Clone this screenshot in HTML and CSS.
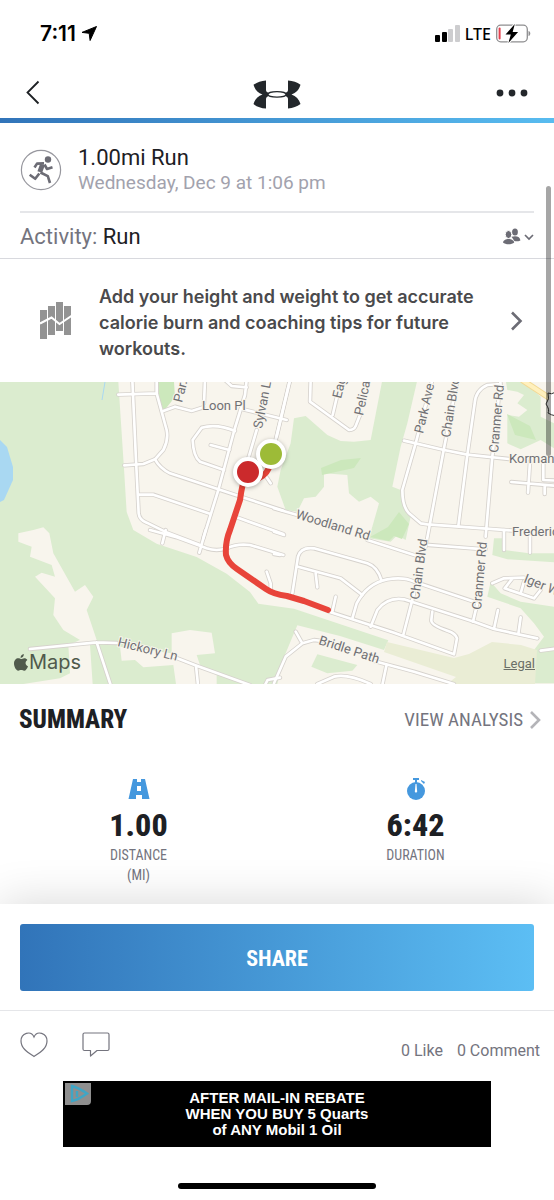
FILE: index.html
```html
<!DOCTYPE html>
<html lang="en">
<head>
    <meta charset="UTF-8">
    <meta name="viewport" content="width=device-width, initial-scale=1.0">
    <title>1.00mi Run</title>
    <link rel="stylesheet" href="styles.css">
</head>
<body>

<div class="status-bar">
    <div class="status-group">
        <span class="time">7:11</span>
        <svg width="15" height="15" viewBox="0 0 15 15"><path d="M14.5 .5 0 6.4l7.2.9.9 7.2z" stroke="#000" stroke-linejoin="round"/></svg>
    </div>
    <div class="status-group status-right">
        <svg width="25" height="17" viewBox="0 0 25 17">
            <rect x="0" y="10" width="5" height="7" rx="1"/>
            <rect x="7" y="7" width="5" height="10" rx="1"/>
            <rect x="13" y="4" width="5" height="13" rx="1" fill="#cdcdcf"/>
            <rect x="20" y="0" width="5" height="17" rx="1" fill="#cdcdcf"/>
        </svg>
        <span class="network">LTE</span>
        <svg width="35" height="19" viewBox="0 0 35 19">
            <rect x=".7" y="1.2" width="30.6" height="16.6" rx="4" fill="#fff" stroke="#8e8e90" stroke-width="1.3"/>
            <path d="M32.5 7v5c2.4-.6 2.4-4.4 0-5z" fill="#8e8e90"/>
            <rect x="2.6" y="3.5" width="2" height="12" rx="1" fill="#e5404e"/>
            <path d="M18.8 0 9.5 10.6h5.3L12.4 19l9.7-11h-5.4z" stroke="#fff" stroke-width="2" paint-order="stroke"/>
        </svg>
    </div>
</div>

<header class="navbar">
    <button class="icon-button" aria-label="Back">
        <svg width="14" height="25" viewBox="0 0 14 25" fill="none" stroke="#1d2024" stroke-width="1.8"><path d="M12.5 1.5 1.5 12.5l11 11"/></svg>
    </button>
    <svg class="logo" width="48" height="29" viewBox="0 0 48 29" fill="#23272b">
        <path d="M13 .5C8 1 4 2.200.5 4.800 2 10 5 13 9.500 14.400 5 16 2 19 .5 24 4 26.800 8 28 13 28.500V19q0-2.500 4-3.500v-2.200q-4-.8-4-3.300z"/>
        <path d="M35 .5c5 .5 9 1.700 12.500 4.300-1.500 5.200-4.500 8.200-9 9.600 4.500 1.600 7.500 4.600 9 9.600-3.500 2.800-7.500 4-12.500 4.500V19q0-2.500-4-3.500v-2.200q4-.8 4-3.300z"/>
        <ellipse cx="24" cy="14.400" rx="9" ry="2.700" fill="#fff" stroke="#23272b" stroke-width="1.200"/>
    </svg>
    <button class="icon-button" aria-label="More options">
        <svg width="32" height="8" viewBox="0 0 32 8" fill="#23272b"><circle cx="4" cy="4" r="3.400"/><circle cx="16" cy="4" r="3.400"/><circle cx="28" cy="4" r="3.400"/></svg>
    </button>
</header>

<main>
    <div class="scrollbar"></div>

    <section class="workout">
        <svg class="run-icon" width="42" height="42" viewBox="0 0 42 42">
            <circle cx="21" cy="21" r="19.600" fill="#fff" stroke="#97979e" stroke-width="1.200"/>
            <circle cx="28" cy="10.500" r="3.200" fill="#6c6c75"/>
            <g fill="none" stroke="#6c6c75" stroke-linejoin="round">
                <path d="M14.500 18.500 17 14.600 24 14.400" stroke-width="2.600"/>
                <path d="M24.500 15.500 27 20l5.500-1.800" stroke-width="2.600"/>
                <path d="m22.500 15.500-2.700 7.500" stroke-width="5"/>
                <path d="m20.500 23.500 7.300 3.700 2.200 6.800" stroke-width="2.600"/>
                <path d="m19.300 24.500-4.100 5.300-5.500-4" stroke-width="2.600"/>
            </g>
        </svg>
        <div>
            <h1>1.00mi Run</h1>
            <p class="date">Wednesday, Dec 9 at 1:06 pm</p>
        </div>
    </section>

    <section class="activity">
        <p>Activity: <strong>Run</strong></p>
        <button class="icon-button" aria-label="Change privacy">
            <svg width="32" height="18" viewBox="0 0 32 18" fill="#6c6c75">
                <ellipse cx="13" cy="4" rx="2.900" ry="3.600"/>
                <path d="M9.500 8.800c5-1.500 8.700.2 8.900 3.600-1.800.9-4.500 1-6 .6z"/>
                <ellipse cx="6.500" cy="6.500" rx="3.300" ry="4" stroke="#fff" stroke-width="1"/>
                <path d="M1 14.500c.3-4.700 10.800-4.700 11.200 0-2.400 2.400-8.900 2.400-11.200 0z"/>
                <path d="m23 7 4 4 4-4" fill="none" stroke="#6c6c75" stroke-width="1.700"/>
            </svg>
        </button>
    </section>

    <a class="tip" href="#">
        <svg width="32" height="39" viewBox="0 0 32 39">
            <path d="M0 9h7v29H0zM8 5h7v29H8zM16 1h7v29h-7zM24 5h7v29h-7z" fill="#939393"/>
            <path d="m0 22.500 11.500-6 8 6.500L32 14.500" fill="none" stroke="#fff" stroke-width="2"/>
        </svg>
        <span class="tip-text">Add your height and weight to get accurate calorie burn and coaching tips for future workouts.</span>
        <svg width="13" height="20" viewBox="0 0 13 20" fill="none" stroke="#6c6c75" stroke-width="2.600"><path d="m2 1.500 8.500 8.500L2 18.500"/></svg>
    </a>

    <div class="map">
        <svg class="map-drawing" viewBox="0 0 554 302" preserveAspectRatio="xMidYMid slice">
            <defs>
                <!-- roads are stroked twice: casing, then fill -->
                <g id="roads" fill="none" stroke-linejoin="round" stroke-linecap="round" transform="scale(.33333)">
                    <g transform="translate(0 -6)">
                        <path d="M397 0 408 240 416 400Q418 420 440 428L495 455 600 495"/>
                        <path d="M355 44 470 40M470 0V40L500 150Q506 180 490 210L465 238 430 252 373 256"/>
                        <path d="M465 238Q480 265 510 280L655 328 850 392M490 93 525 80 575 93 610 82M615 0 612 70"/>
                        <path d="M675 0 695 18 740 22M740 0 735 45 703 150 655 330 610 475"/>
                        <path d="M730 88 860 120M705 153Q650 130 605 143L578 180Q580 230 600 245L672 270M632 195 688 210"/>
                        <path d="M770 150 745 235M795 285 812 310M415 344H460L632 402M710 412 850 462M870 0 830 170"/>
                    </g>
                    <g transform="translate(822 -6)">
                        <path d="M110 0 108 65 225 150Q240 150 245 138L260 100M190 45 176 105M48 0 0 200"/>
                        <path d="M390 182 510 210 580 224 705 237M475 0 425 190 385 330Q385 380 405 400L440 430 460 433 555 440 720 452"/>
                        <path d="M550 0 510 205 455 500M680 12 640 15Q605 30 602 70L580 225 553 438M680 0 655 230 635 470"/>
                        <path d="M768 245 762 338M808 250V300L850 302M712 306 850 318M812 318V342M0 385 70 405"/>
                    </g>
                    <g transform="translate(0 444)">
                        <path d="M450 0 530 22 620 55Q650 65 680 55 710 40 750 45L850 75M497 0 487 40M617 0 598 68M800 125 812 160V185"/>
                        <path d="M90 357 290 337 350 339M290 337 332 465M520 380 590 407 750 465M588 407 594 465M795 465 803 450 840 443"/>
                    </g>
                    <g transform="translate(822 444)">
                        <path d="M0 5 30 15M0 72 18 75M280 30 430 78M465 45 635 58M690 0V60M768 10V68"/>
                        <path d="M55 190 72 80Q80 50 120 55L280 100Q310 110 322 150M72 110 200 145 265 195M125 130 130 172"/>
                        <path d="M235 265 248 220Q280 160 340 148 390 140 420 155L600 215M290 290 310 240Q340 200 390 208L600 275 660 297 790 325"/>
                        <path d="M165 245 360 308 540 373M185 200 175 245M420 190 387 318M540 373 549 325Q545 310 520 302 470 285 472 270L475 245"/>
                        <path d="M610 220 597 275M672 240 660 296M740 262 733 312M65 305 82 335M0 460 35 380 85 340 120 330 160 335"/>
                        <path d="M300 393 420 425 540 462M338 403 325 465M130 462 180 440Q220 430 290 462"/>
                        <path d="M655 160 690 145 750 143M715 146 692 175 780 205 800 180M750 155 740 190M800 362 850 355"/>
                    </g>
                </g>
            </defs>

            <rect width="554" height="302" fill="#f8f5ed"/>

            <g fill="#dbeccf" transform="scale(.33333)">
                <path d="M0 0H355L372 260 380 390 400 444 470 485 590 525 680 575 750 630 775 665 882 680 1165 775 1152 804 1020 762 892 730 850 830 832 906H0Z"/>
                <g transform="translate(822 -6)">
                    <path d="M325 0H430L400 130 380 200 355 320 380 330 410 410 395 480 370 465 350 485 285 475 315 370 290 350 255 365 225 340 220 285 150 280 150 320 125 350 90 355 70 395 35 390 10 320 20 270 50 190 60 115 95 108 160 165 200 183 240 185 290 180Z"/>
                    <path d="M695 0H745L800 50V110L840 130V205L800 180 740 208 700 190V105L735 110 760 90 730 70 750 45 730 35 700 30Z"/>
                </g>
                <g transform="translate(822 444)">
                    <path d="M660 25H690V60L765 70H840V97L700 88 655 75Z"/>
                    <path d="M650 155 680 190 740 215 840 230V460H775L780 360 810 320 780 280 740 235 640 200Z"/>
                    <path d="M112 410 130 373 250 405 235 422 160 430Z"/>
                </g>
            </g>

            <g fill="#f8f5ed" transform="translate(0 148) scale(.33333)">
                <path d="M55 10 100 0 130-8 148 10 160 70 225 185 255 165 280 200 260 240 290 330 270 345 278 462H70L180 445 210 430 205 345 240 330 190 300 160 255 165 205 105 140 125 128 165 140 155 105 90 80 95 50 55 35Z"/>
                <path d="M360 350 365 392 405 390 430 412 520 405 528 462H650V430L600 405 590 375 645 370 635 308 570 300 515 310V370Z"/>
            </g>
            <path d="M469 272 492 260 521 263 537 268 535 302H447L456 295 384 270 387 260 454 276Z" fill="#eaedd5"/>
            <path d="M158 0H174L175 15 163 30 159 20ZM321 86 341 78 361 76 354 86 322 93ZM507 32 530 44 536 58 515 53ZM388 145 399 130 409 142 402 157 394 154 389 159 370 155Z" fill="#cce8bc"/>
            <path d="M0 58 7 65 13 85 13 98 4 118 0 120Z" fill="#a9d8f2"/>
            <path d="M105 0 102 18" stroke="#a9d8f2"/>
            <path d="M522-2 554 19" stroke="#f2d894" stroke-width="6"/>
            <path d="M522-2 554 19" stroke="#fff0bd" stroke-width="4"/>

            <use href="#roads" class="road-casing"/>
            <use href="#roads" class="road-fill"/>

            <path d="M548 11q3 2 8-1v24q-5-1-8-3 2-3-2-9 4-5 2-11z" fill="#fff" stroke="#333"/>

            <g class="road-label">
                <text x="202" y="28">Loon Pl</text>
                <text transform="translate(182 21) rotate(-76)">Par.</text>
                <text transform="translate(262 47) rotate(-79)">Sylvan L</text>
                <text transform="translate(341 17) rotate(-76)">Eag</text>
                <text transform="translate(363 34) rotate(-78)">Pelica</text>
                <text transform="translate(423 52) rotate(-77)">Park Ave</text>
                <text transform="translate(450 56) rotate(-81)">Chain Blvd</text>
                <text transform="translate(498 71) rotate(-85)">Cranmer Rd</text>
                <text x="509" y="81">Korman</text>
                <text x="512" y="154">Frederic</text>
                <text transform="translate(295 136) rotate(17)">Woodland Rd</text>
                <text transform="translate(419 218) rotate(-82)">Chain Blvd</text>
                <text transform="translate(481 228) rotate(-85)">Cranmer Rd</text>
                <text transform="translate(523 200) rotate(22)">Iger W</text>
                <text transform="translate(318 262) rotate(18)">Bridle Path</text>
                <text transform="translate(117 264) rotate(14)">Hickory Ln</text>
            </g>

            <path class="route" d="M270 82Q268 92 259 96L245 95Q242 103 240 118L230 148Q225 160 226 173 228 181 237 187L250 196 266 207Q273 212 287 214L304 219 328 228"/>
            <g class="pins">
                <circle cx="271" cy="72" r="13" fill="#9dbb37"/>
                <circle cx="248" cy="90" r="13" fill="#cb2a2c"/>
            </g>
        </svg>
        <div class="map-brand">
            <svg width="14" height="17" viewBox="0 0 14 17" fill="#505a4c"><path d="M9.800 0c.2 2-1.200 3.800-3.200 3.900C6.400 2 8 .3 9.800 0zM7 5c1 0 1.800-.8 3.300-.8 1.200 0 2.400.6 3.100 1.700-2.700 1.600-2.300 5.200.6 6.300-.8 2.200-2.200 4.600-3.800 4.600-1.200 0-1.600-.7-3-.7s-1.900.7-3 .7C2.400 16.800 0 13 0 9.600c0-3.300 2.100-5.300 4.200-5.300C5.500 4.300 6.300 5 7 5z"/></svg>
            <span>Maps</span>
        </div>
        <a class="map-legal" href="#">Legal</a>
    </div>

    <section class="summary">
        <div class="summary-header">
            <h2>SUMMARY</h2>
            <a href="#">VIEW ANALYSIS
                <svg width="12" height="18" viewBox="0 0 12 18" fill="none" stroke="#b4b4b8" stroke-width="2.600"><path d="m2 1 8 8-8 8"/></svg>
            </a>
        </div>
        <div class="stats">
            <div class="stat">
                <svg width="22" height="22" viewBox="0 0 22 22"><path d="M5 1h4v3h4V1h4l4.500 20H14v-4H8v4H.5zM9 8v5h4V8z" fill="#4598de" fill-rule="evenodd"/></svg>
                <span class="stat-value">1.00</span>
                <span class="stat-label">DISTANCE<br>(MI)</span>
            </div>
            <div class="stat">
                <svg width="22" height="22" viewBox="0 0 22 22">
                    <circle cx="11" cy="13" r="9" fill="#4598de"/>
                    <path d="M8 0h6v2h-2v3h-2V2H8zM16 2l4 2-1 2-3-3z" fill="#4598de"/>
                    <path d="M10.500 6h1l.5 6q1 1.500-1 3-2-1.500-1-3z" fill="#fff"/>
                </svg>
                <span class="stat-value">6:42</span>
                <span class="stat-label">DURATION</span>
            </div>
        </div>
    </section>
</main>

<footer>
    <div class="share">
        <button class="share-button">SHARE</button>
    </div>
    <div class="social">
        <button class="icon-button" aria-label="Like">
            <svg width="28" height="26" viewBox="0 0 28 26" fill="none" stroke="#74747e" stroke-width="1.200"><path d="M14 24.500C8 20.500 1 16.500 1 9c0-8 10-11 13-4 3-7 13-4 13 4 0 7.500-7 11.500-13 15.500z"/></svg>
        </button>
        <button class="icon-button" aria-label="Comment">
            <svg width="28" height="26" viewBox="0 0 28 26" fill="none" stroke="#74747e" stroke-width="1.200" stroke-linejoin="round"><path d="M2.500 1h23q1.500 0 1.500 1.500V17q0 1.500-1.500 1.500H15L8.500 24v-5.500h-6Q1 18.500 1 17V2.500Q1 1 2.500 1z"/></svg>
        </button>
        <p class="counts"><span>0 Like</span><span>0 Comment</span></p>
    </div>
    <a class="ad" href="#">
        <svg class="ad-choices" width="26" height="22" viewBox="0 0 26 22">
            <path d="M0 0h26v18q0 4-4 4H0z" fill="#8f8f8f"/>
            <path d="M7 3v15q6-1 15-7.500Q14 5 7 3zM12 8v6" fill="none" stroke="#3fa6c6" stroke-width="2.400"/>
        </svg>
        <span>AFTER MAIL-IN REBATE</span>
        <span>WHEN YOU BUY 5 Quarts</span>
        <span>of ANY Mobil 1 Oil</span>
    </a>
    <div class="home-indicator"></div>
</footer>

</body>
</html>
```
FILE: styles.css
```css
* {
    box-sizing: border-box;
}
body {
    margin: 0;
    min-height: 100vh;
    display: flex;
    flex-direction: column;
    background-color: #fff;
    color: #1d2024;
    font-family: Roboto, "Liberation Sans", sans-serif;
}
h1, h2, p {
    margin: 0;
}
a {
    color: inherit;
    text-decoration: none;
}
svg {
    display: block;
    flex: none;
}
.icon-button {
    padding: 0;
    border: none;
    background: none;
    cursor: pointer;
}

/* Status bar and navigation */
.status-bar {
    display: flex;
    justify-content: space-between;
    align-items: center;
    height: 67px;
    padding: 0 23px 0 40px;
    color: #000;
    font-family: Inter, sans-serif;
}
.status-group {
    display: flex;
    align-items: center;
    gap: 6px;
}
.status-right {
    gap: 5px;
}
.time {
    font-size: 21px;
    font-weight: 600;
}
.network {
    font-size: 16px;
    font-weight: 500;
    font-family: "Noto Sans", sans-serif;
}
.navbar {
    display: flex;
    justify-content: space-between;
    align-items: center;
    height: 56px;
    padding: 0 26px;
    border-bottom: 5px solid;
    border-image: linear-gradient(to right, #3174b9, #58bcf0) 1;
}
.logo {
    margin: 3px 0 0 18px;
}

/* Workout details */
main {
    position: relative;
    flex: 1;
}
.scrollbar {
    position: absolute;
    z-index: 1;
    top: 63px;
    right: 3px;
    width: 5px;
    height: 270px;
    border-radius: 3px;
    background-color: rgba(0, 0, 0, 0.35);
}
.workout {
    display: flex;
    align-items: center;
    gap: 16px;
    height: 90px;
    margin: 0 20px;
    padding-top: 6px;
    border-bottom: 2px solid #e5e6e9;
}
.workout h1 {
    font-size: 22px;
    line-height: 26px;
    font-weight: 400;
}
.date {
    color: #a2a2ad;
    font-size: 19px;
    line-height: 24px;
}
.activity {
    display: flex;
    justify-content: space-between;
    align-items: center;
    height: 46px;
    padding: 2px 20px 0;
    border-bottom: 1px solid #d8d9de;
    color: #74747e;
    font-size: 22px;
}
.activity strong {
    color: #1d2024;
    font-weight: 400;
}
.tip {
    display: flex;
    align-items: center;
    height: 123px;
    padding: 0 31px 0 40px;
    color: #4a4a4c;
    font-family: Inter, sans-serif;
    font-size: 18px;
    line-height: 26px;
    font-weight: 600;
}
.tip-text {
    flex: 1;
    margin: 4px 20px 0 27px;
}

/* Map */
.map {
    position: relative;
}
.map-drawing {
    width: 100%;
    min-height: 302px;
}
.road-casing {
    stroke: #d6d2cd;
    stroke-width: 13px;
}
.road-fill {
    stroke: #fff;
    stroke-width: 8px;
}
.road-label {
    fill: #707074;
    stroke: #f8f5ed;
    stroke-width: 2px;
    paint-order: stroke;
    font-size: 13px;
}
.route {
    fill: none;
    stroke: #e8443a;
    stroke-width: 6px;
    stroke-linecap: round;
    stroke-linejoin: round;
}
.pins {
    stroke: #fff;
    stroke-width: 4px;
    filter: drop-shadow(0 1px 2px rgba(0, 0, 0, 0.3));
}
.map-brand {
    position: absolute;
    left: 14px;
    bottom: 10px;
    display: flex;
    align-items: center;
    gap: 1px;
    color: #505a4c;
    font-family: Inter, sans-serif;
    font-size: 20px;
    line-height: 24px;
    font-weight: 400;
}
.map-legal {
    position: absolute;
    right: 19px;
    bottom: 12px;
    color: #6b6f67;
    font-size: 13px;
    line-height: 16px;
    text-decoration: underline;
}

/* Summary */
.summary {
    padding-bottom: 19px;
    font-family: "Roboto Condensed", "Liberation Sans Narrow", Roboto, sans-serif;
}
.summary-header {
    display: flex;
    justify-content: space-between;
    align-items: center;
    height: 71px;
    padding: 0 13px 0 19px;
}
.summary-header h2 {
    font-size: 25px;
    font-weight: 800;
}
.summary-header a {
    display: flex;
    align-items: center;
    gap: 6px;
    color: #74747e;
    font-size: 19px;
}
.stats {
    display: grid;
    grid-template-columns: 1fr 1fr;
    padding-top: 23px;
}
.stat {
    display: flex;
    flex-direction: column;
    align-items: center;
}
.stat-value {
    padding: 8px 0 3px;
    font-size: 32px;
    line-height: 34px;
    font-weight: 800;
}
.stat-label {
    color: #74747e;
    font-size: 14px;
    line-height: 20px;
    text-align: center;
}

/* Share, likes and ad */
footer {
    position: relative;
    display: flex;
    flex-direction: column;
    align-items: center;
    background-color: #fff;
    box-shadow: 0 0 44px rgba(0, 0, 0, 0.16);
}
.share {
    width: 100%;
    padding: 20px 20px 19px;
    border-bottom: 1px solid #e5e6e9;
}
.share-button {
    display: block;
    width: 100%;
    height: 67px;
    padding: 2px 0 0;
    border: none;
    border-radius: 3px;
    background: linear-gradient(to right, #3174b9, #5cbef4);
    color: #fff;
    font-family: "Roboto Condensed", "Liberation Sans Narrow", Roboto, sans-serif;
    font-size: 22px;
    font-weight: 700;
    cursor: pointer;
}
.social {
    display: flex;
    align-items: center;
    gap: 34px;
    width: 100%;
    height: 66px;
    padding: 2px 14px 0 20px;
}
.counts {
    display: flex;
    gap: 14px;
    margin-left: auto;
    padding-top: 10px;
    color: #74747e;
    font-size: 16px;
}
.ad {
    position: relative;
    width: 428px;
    max-width: 100%;
    margin-top: 4px;
    padding: 9px 0;
    background-color: #000;
    color: #fff;
    font-family: "Liberation Sans", sans-serif;
    font-size: 15px;
    line-height: 16px;
    font-weight: 700;
    text-align: center;
}
.ad span {
    display: block;
}
.ad-choices {
    position: absolute;
    top: 2px;
    left: 2px;
}
.home-indicator {
    width: 198px;
    height: 6px;
    margin: 36px 0 11px;
    border-radius: 3px;
    background-color: #000;
}
```
